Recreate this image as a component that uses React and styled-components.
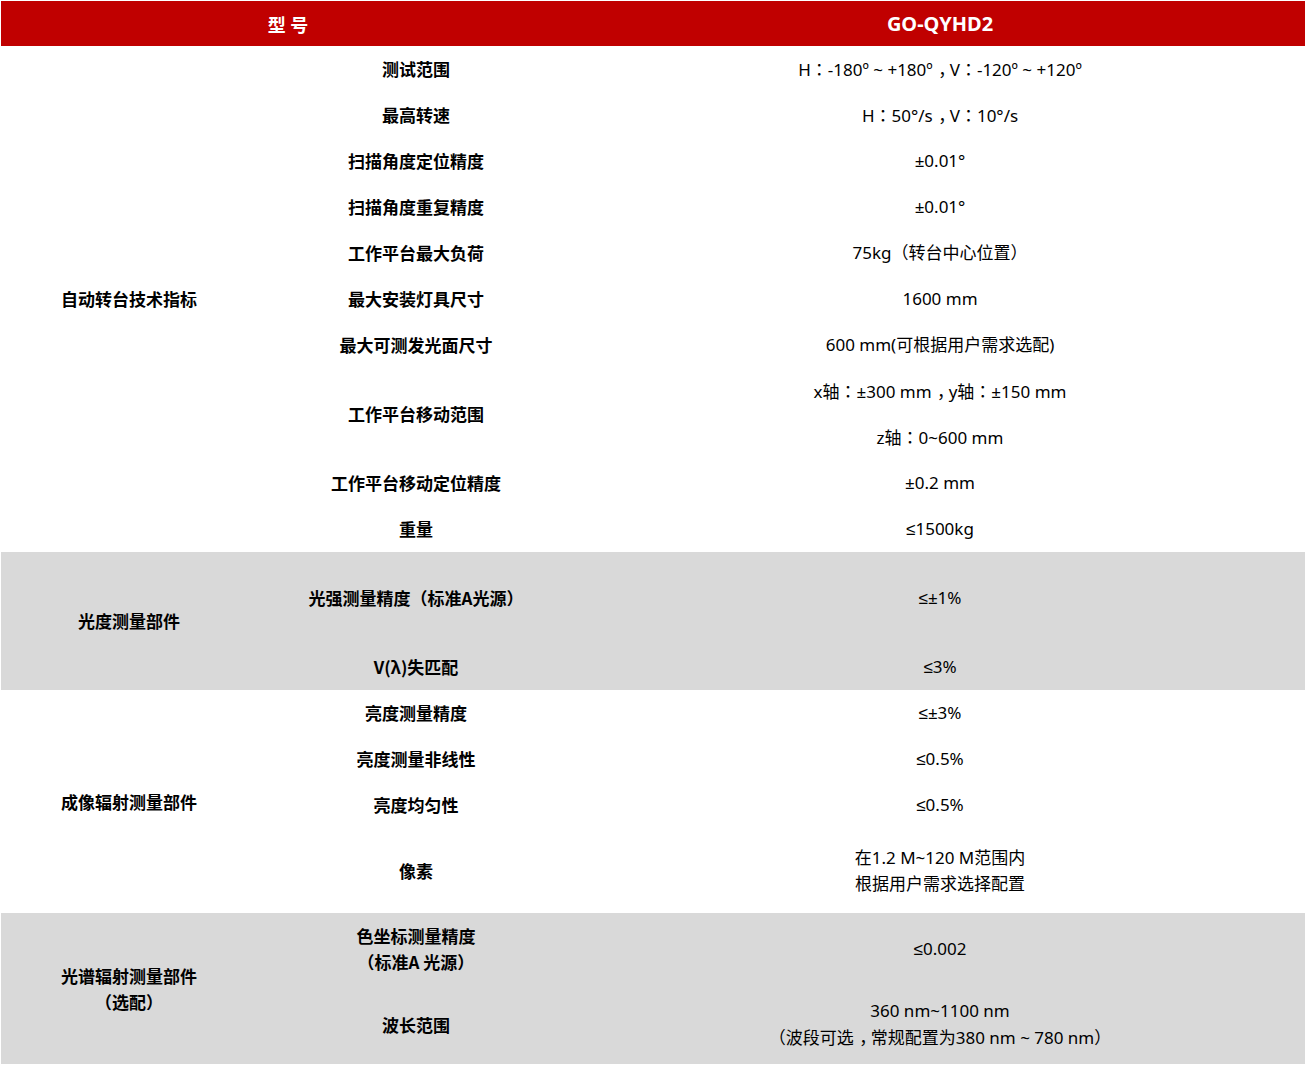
import React from "react";
import styled, { createGlobalStyle } from "styled-components";

const GlobalStyle = createGlobalStyle`
  html, body {
    margin: 0;
    padding: 0;
    background: #fff;
  }
  body {
    padding: 1px;
    font-family: "Noto Sans", "Liberation Sans", "Noto Sans CJK SC", sans-serif;
    color: #000;
  }
`;

const Table = styled.table`
  width: 1304px;
  border-collapse: collapse;
  border-spacing: 0;
  table-layout: fixed;
  font-size: 17px;
`;

const HeadRow = styled.tr`
  height: 45px;
  background: #c00000;
  color: #fff;
`;

const HeadCell = styled.th`
  padding: 0;
  font-weight: 700;
  font-size: ${(p) => (p.$cjk ? "18px" : "20px")};
  font-family: "Noto Sans", "Noto Sans CJK SC", sans-serif;
  text-align: center;
  vertical-align: middle;
`;

const Row = styled.tr`
  height: ${(p) => p.$h || 46}px;
  background: ${(p) => (p.$gray ? "#d9d9d9" : "#fff")};
`;

const Cell = styled.td`
  padding: 0;
  text-align: center;
  vertical-align: middle;
  line-height: 26px;
  font-weight: ${(p) => (p.$bold ? 700 : 400)};
  font-family: ${(p) =>
    p.$bold
      ? '"Noto Sans CJK SC", sans-serif'
      : '"Noto Sans", "Liberation Sans", "Noto Sans CJK SC", sans-serif'};
`;

// full-width colon: centred form, as in the source table
const Colon = styled.span`
  font-family: "Noto Sans CJK TC", sans-serif;
`;

// full-width comma: on the baseline, moved to the middle of its em box
const Comma = styled.span`
  font-family: "Noto Sans CJK SC", sans-serif;
  padding-left: 0.32em;
  letter-spacing: -0.32em;
`;

const sections = [
  {
    group: ["自动转台技术指标"],
    gray: false,
    rows: [
      { name: ["测试范围"], value: ["H：-180º ~ +180º，V：-120º ~ +120º"] },
      { name: ["最高转速"], value: ["H：50°/s，V：10°/s"] },
      { name: ["扫描角度定位精度"], value: ["±0.01°"] },
      { name: ["扫描角度重复精度"], value: ["±0.01°"] },
      { name: ["工作平台最大负荷"], value: ["75kg（转台中心位置）"] },
      { name: ["最大安装灯具尺寸"], value: ["1600 mm"] },
      { name: ["最大可测发光面尺寸"], value: ["600 mm(可根据用户需求选配)"] },
      {
        name: ["工作平台移动范围"],
        split: ["x轴：±300 mm，y轴：±150 mm", "z轴：0~600 mm"],
      },
      { name: ["工作平台移动定位精度"], value: ["±0.2 mm"] },
      { name: ["重量"], value: ["≤1500kg"] },
    ],
  },
  {
    group: ["光度测量部件"],
    gray: true,
    rows: [
      { name: ["光强测量精度（标准A光源）"], value: ["≤±1%"], h: 92 },
      { name: ["V(λ)失匹配"], value: ["≤3%"] },
    ],
  },
  {
    group: ["成像辐射测量部件"],
    gray: false,
    rows: [
      { name: ["亮度测量精度"], value: ["≤±3%"] },
      { name: ["亮度测量非线性"], value: ["≤0.5%"] },
      { name: ["亮度均匀性"], value: ["≤0.5%"] },
      {
        name: ["像素"],
        value: ["在1.2 M~120 M范围内", "根据用户需求选择配置"],
        h: 85,
      },
    ],
  },
  {
    group: ["光谱辐射测量部件", "（选配）"],
    gray: true,
    rows: [
      { name: ["色坐标测量精度", "（标准A 光源）"], value: ["≤0.002"], h: 72 },
      {
        name: ["波长范围"],
        value: ["360 nm~1100 nm", "（波段可选，常规配置为380 nm ~ 780 nm）"],
        h: 79,
      },
    ],
  },
];

function Text({ children }) {
  return children.split(/([：，])/).map((part, i) => {
    if (part === "：") return <Colon key={i}>{part}</Colon>;
    if (part === "，") return <Comma key={i}>{part}</Comma>;
    return part;
  });
}

function Lines({ lines }) {
  return lines.map((t, i) => (
    <React.Fragment key={i}>
      {i > 0 && <br />}
      <Text>{t}</Text>
    </React.Fragment>
  ));
}

function Section({ section }) {
  const span = section.rows.reduce((n, r) => n + (r.split ? 2 : 1), 0);
  const out = [];
  section.rows.forEach((r, i) => {
    const groupCell =
      i === 0 ? (
        <Cell $bold rowSpan={span}>
          <Lines lines={section.group} />
        </Cell>
      ) : null;
    if (r.split) {
      out.push(
        <Row key={i + "a"} $gray={section.gray}>
          {groupCell}
          <Cell $bold rowSpan={2}>
            <Lines lines={r.name} />
          </Cell>
          <Cell>
            <Text>{r.split[0]}</Text>
          </Cell>
        </Row>
      );
      out.push(
        <Row key={i + "b"} $gray={section.gray}>
          <Cell>
            <Text>{r.split[1]}</Text>
          </Cell>
        </Row>
      );
    } else {
      out.push(
        <Row key={i} $gray={section.gray} $h={r.h}>
          {groupCell}
          <Cell $bold>
            <Lines lines={r.name} />
          </Cell>
          <Cell>
            <Lines lines={r.value} />
          </Cell>
        </Row>
      );
    }
  });
  return out;
}

export default function App() {
  return (
    <>
      <GlobalStyle />
      <Table>
        <colgroup>
          <col style={{ width: 256 }} />
          <col style={{ width: 318 }} />
          <col />
        </colgroup>
        <thead>
          <HeadRow>
            <HeadCell colSpan={2} $cjk>
              型 号
            </HeadCell>
            <HeadCell>GO-QYHD2</HeadCell>
          </HeadRow>
        </thead>
        <tbody>
          {sections.map((s, i) => (
            <Section key={i} section={s} />
          ))}
        </tbody>
      </Table>
    </>
  );
}
